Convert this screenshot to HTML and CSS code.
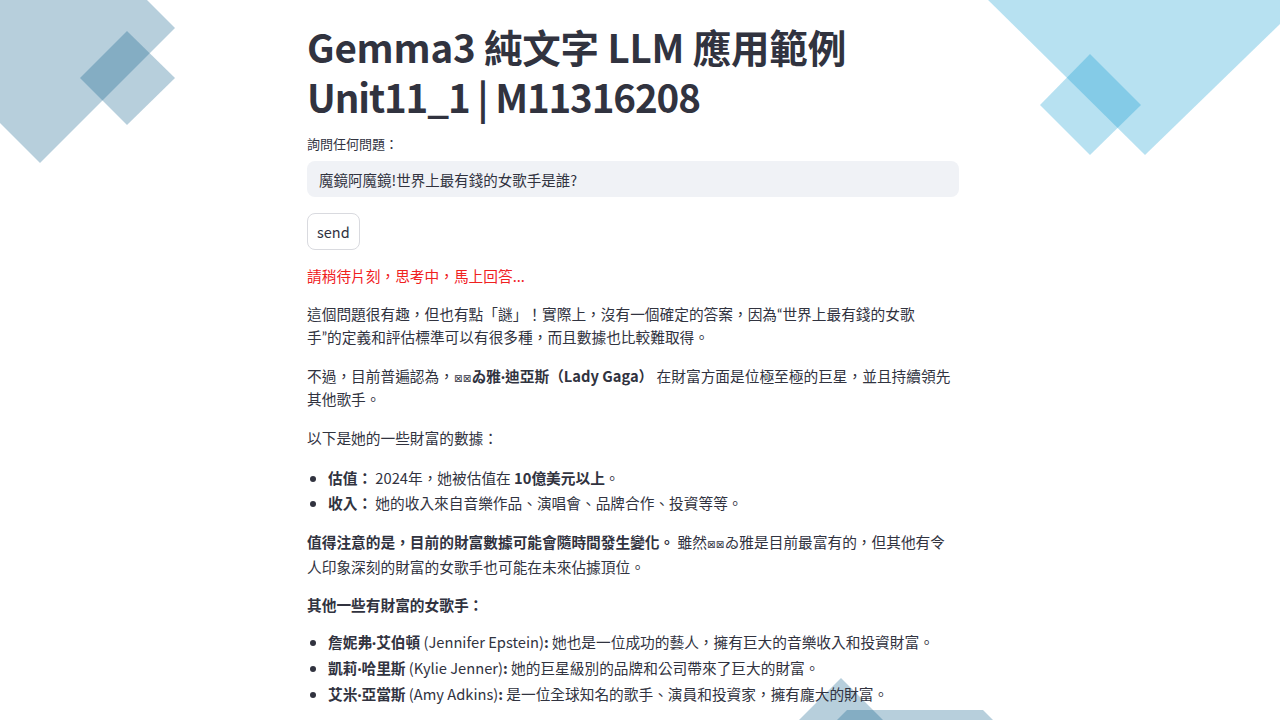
FILE: index.html
```html
<!DOCTYPE html>
<html lang="zh-Hant">
<head>
<meta charset="utf-8">
<title>Gemma3 純文字 LLM 應用範例</title>
<link rel="stylesheet" href="styles.css">
</head>
<body>
<svg class="backdrop" width="1280" height="720" viewBox="0 0 1280 720" aria-hidden="true">
  <polygon class="steel" points="40,-107 175,28 40,163 -95,28"/>
  <polygon class="steel" points="127,31 175,78 127,125 80,78"/>
  <polygon class="sky" points="1145,-170 1310,-5 1145,155 983,-5"/>
  <polygon class="sky" points="1090,54 1141,105 1090,155 1040,105"/>
  <polygon class="steel" points="841,678 883,720 799,720"/>
  <polygon class="steel" points="847,710 983,710 993,720 837,720"/>
</svg>
<main class="content">
  <h1 class="title"><span class="title-line">Gemma3 純文字 LLM 應用範例</span><span class="title-line tight">Unit11_1 | M11316208</span></h1>
  <label class="label" for="q">詢問任何問題：</label>
  <div class="input" id="q">魔鏡阿魔鏡!世界上最有錢的女歌手是誰?</div>
  <button class="btn" type="button">send</button>
  <p class="waiting">請稍待片刻，思考中，馬上回答...</p>
  <div class="answer">
    <p>這個問題很有趣，但也有點「謎」！實際上，沒有一個確定的答案，因為<span class="lat">“</span>世界上最有錢的女歌<br>手<span class="lat">”</span>的定義和評估標準可以有很多種，而且數據也比較難取得。</p>
    <p>不過，目前普遍認為，<b><span class="tofu">⊠⊠</span>ゐ雅<span class="lat">·</span>迪亞斯（Lady Gaga）</b> 在財富方面是位極至極的巨星，並且持續領先<br>其他歌手。</p>
    <p>以下是她的一些財富的數據：</p>
    <ul class="list">
      <li><b>估值：</b> 2024年，她被估值在 <b>10億美元以上</b>。</li>
      <li><b>收入：</b> 她的收入來自音樂作品、演唱會、品牌合作、投資等等。</li>
    </ul>
    <p class="tall"><b>值得注意的是，目前的財富數據可能會隨時間發生變化。</b> 雖然<span class="tofu">⊠⊠</span>ゐ雅是目前最富有的，但其他有令<br>人印象深刻的財富的女歌手也可能在未來佔據頂位。</p>
    <p class="lead"><b>其他一些有財富的女歌手：</b></p>
    <ul class="list loose">
      <li><b>詹妮弗<span class="lat">·</span>艾伯頓</b> (Jennifer Epstein)<b>:</b> 她也是一位成功的藝人，擁有巨大的音樂收入和投資財富。</li>
      <li><b>凱莉<span class="lat">·</span>哈里斯</b> (Kylie Jenner)<b>:</b> 她的巨星級別的品牌和公司帶來了巨大的財富。</li>
      <li><b>艾米<span class="lat">·</span>亞當斯</b> (Amy Adkins)<b>:</b> 是一位全球知名的歌手、演員和投資家，擁有龐大的財富。</li>
    </ul>
  </div>
</main>
</body>
</html>
```

FILE: styles.css
```css
html, body {
  margin: 0;
  padding: 0;
  background: #ffffff;
}

body {
  font-family: "Noto Sans CJK TC", "Noto Sans", sans-serif;
  color: #31333f;
  width: 1280px;
  height: 720px;
  overflow: hidden;
  position: relative;
}

.backdrop {
  position: absolute;
  top: 0;
  left: 0;
  z-index: 0;
}

.steel { fill: rgba(18, 95, 138, 0.3); }
.sky { fill: rgba(7, 152, 207, 0.29); }

.content {
  position: relative;
  z-index: 1;
  width: 652px;
  margin-left: 307px;
  padding-top: 21px;
  display: flex;
  flex-direction: column;
  align-items: flex-start;
}

.title {
  margin: 0;
  font-family: "Noto Sans CJK TC", sans-serif;
  font-weight: 700;
  font-size: 38.5px;
  line-height: 50px;
  letter-spacing: -0.2px;
  color: #31333f;
}

.title-line {
  display: block;
}

.title-line.tight {
  letter-spacing: -1.1px;
}

.label {
  margin-top: 14px;
  font-size: 13px;
  line-height: 18px;
}

.input {
  margin-top: 8px;
  align-self: stretch;
  height: 36px;
  box-sizing: border-box;
  padding: 0 12px;
  display: flex;
  align-items: center;
  background: #f0f2f6;
  border-radius: 8px;
  font-size: 14.5px;
}

.btn {
  margin-top: 16px;
  height: 37px;
  padding: 0 9px;
  background: #ffffff;
  border: 1px solid #d9dadf;
  border-radius: 8px;
  font-family: "Noto Sans CJK TC", sans-serif;
  font-size: 14.5px;
  color: #31333f;
}

.waiting {
  margin: 14px 0 0;
  color: #f0211f;
  font-size: 14.7px;
  line-height: 23px;
}

.answer {
  align-self: stretch;
  margin-top: 15px;
  font-size: 14.7px;
  line-height: 23px;
}

.answer p {
  margin: 0 0 16px;
}

.answer p.tall {
  line-height: 25px;
  margin-bottom: 14px;
}

.answer p.lead {
  margin-bottom: 13px;
}

.answer b {
  font-weight: 700;
}

.list {
  margin: 0 0 14px;
  padding-left: 21px;
}

.list li {
  line-height: 25px;
}

.list.loose li {
  line-height: 26px;
}

.lat {
  font-family: "Lato", sans-serif;
  line-height: 0;
}

.tofu {
  font-family: "DejaVu Sans", sans-serif;
  font-size: 10px;
  line-height: 0;
  font-weight: 400;
  letter-spacing: 0.5px;
}
```
